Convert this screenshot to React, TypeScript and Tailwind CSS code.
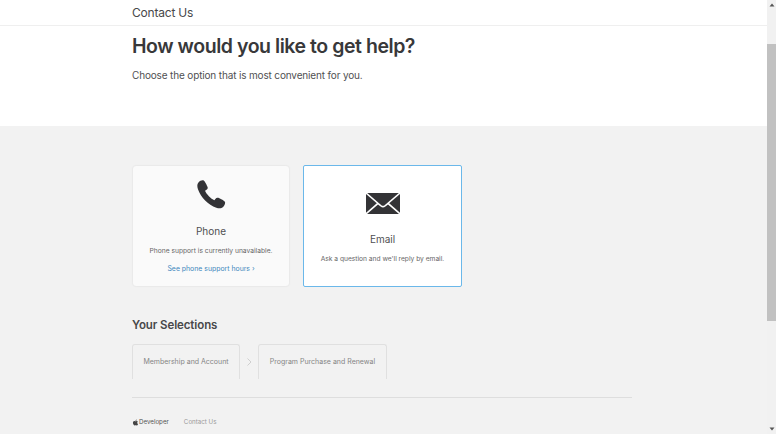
import React from "react";
import { FaApple } from "react-icons/fa";

function PhoneIcon() {
  return (
    <svg width="29" height="29" viewBox="0 0 30 30" className="block">
      <path
        d="M1.5 2.5 C3 0.8 5.5 -0.2 7 0.6 C8 1.2 10.5 6 11 7.6 C11.3 8.8 10.8 9.5 9.5 10.4 L8.3 11.2 C9.6 14.6 14.5 19.6 18 21 L19 19.6 C19.9 18.4 20.8 18 22 18.4 C23.6 19 28 21.4 28.8 22.4 C29.6 23.6 28.6 26.4 27 27.9 C25.3 29.5 22.6 29.4 20 28.6 C11.5 25.8 4 18 1 9.5 C0.2 7 -0.2 4.5 1.5 2.5 Z"
        fill="#333336"
      />
    </svg>
  );
}

function MailIcon() {
  return (
    <svg width="34" height="21" viewBox="0 0 34 21" className="block">
      <path d="M1.2 0 H32.8 L18.6 12.2 C17.6 13 16.4 13 15.4 12.2 Z" fill="#333336" />
      <path d="M0 1 L10.8 10.3 L0 19.8 Z" fill="#333336" />
      <path d="M34 1 L23.2 10.3 L34 19.8 Z" fill="#333336" />
      <path d="M1 21 L12 11.4 L14.6 13.6 C16.1 14.9 17.9 14.9 19.4 13.6 L22 11.4 L33 21 Z" fill="#333336" />
    </svg>
  );
}

function Selection({ label, width }: { label: string; width: string }) {
  return (
    <div className={`${width} h-[35px] pt-[1px] border border-b-0 border-[#e0e0e0] rounded-t-[3px] flex items-center justify-center text-[7px] text-[#858585]`}>
      {label}
    </div>
  );
}

export default function App() {
  return (
    <div className="w-[779px] h-[437px] bg-white overflow-hidden flex font-['Inter','Liberation_Sans',sans-serif]">
      <main className="w-[767px] h-[434px] flex flex-col overflow-hidden">
        <header className="h-[26px] shrink-0 border-b border-[#efefef] pl-[132px] pt-[5px] text-[12px] tracking-[-0.2px] leading-[16px] text-[#48484a]">
          Contact Us
        </header>
        <section className="h-[100px] shrink-0 pl-[132px] bg-white">
          <h1 className="mt-[8px] text-[19.5px] tracking-[-0.45px] leading-[25px] font-semibold text-[#38383a]">
            How would you like to get help?
          </h1>
          <p className="mt-[9px] text-[10px] tracking-[-0.15px] leading-[14px] text-[#505052]">
            Choose the option that is most convenient for you.
          </p>
        </section>
        <section className="flex-1 bg-[#f2f2f2] pl-[132px] pr-[135px] pt-[39px]">
          <div className="flex gap-[14px]">
            <div className="ml-[1px] mt-[1px] w-[156px] h-[120px] bg-[#fafafa] rounded-[3px] shadow-[0_0_2px_rgba(0,0,0,0.12)] flex flex-col items-center pt-[14px]">
              <PhoneIcon />
              <div className="mt-[15px] text-[10px] leading-[14px] text-[#505052]">Phone</div>
              <div className="mt-[8px] text-[6.7px] leading-[10px] text-[#666]">Phone support is currently unavailable.</div>
              <div className="mt-[8px] text-[6.9px] leading-[10px] text-[#3f88bd]">See phone support hours ›</div>
            </div>
            <div className="w-[159px] h-[122px] bg-white rounded-[2px] border border-[#6bb8ea] flex flex-col items-center pt-[27px]">
              <MailIcon />
              <div className="mt-[18px] text-[10px] leading-[14px] text-[#505052]">Email</div>
              <div className="mt-[8px] text-[6.65px] leading-[10px] text-[#666]">Ask a question and we'll reply by email.</div>
            </div>
          </div>
          <h2 className="mt-[30px] text-[11.5px] tracking-[-0.1px] leading-[16px] font-semibold text-[#48484a]">Your Selections</h2>
          <div className="mt-[11px] flex items-center">
            <Selection label="Membership and Account" width="w-[108px]" />
            <svg width="18" height="10" viewBox="0 0 18 10" className="block">
              <path d="M7.5 1.5 L11 5 L7.5 8.5" fill="none" stroke="#cfcfcf" strokeWidth="1" />
            </svg>
            <Selection label="Program Purchase and Renewal" width="w-[129px]" />
          </div>
          <div className="mt-[18px] border-t border-[#dedede]" />
          <footer className="mt-[20px] flex items-center text-[6.2px] leading-[8px]">
            <FaApple className="text-[7px] text-[#444]" />
            <span className="text-[#555]">Developer</span>
            <span className="ml-[15px] text-[#999]">Contact Us</span>
          </footer>
        </section>
      </main>
      <aside className="w-[9px] h-[434px] bg-[#f1f1f1] flex flex-col items-center">
        <svg width="6" height="4" viewBox="0 0 6 4" className="mt-[3px] block"><path d="M3 0.5 L5.5 3.5 H0.5 Z" fill="#555" /></svg>
        <div className="mt-[37px] w-full h-[277px] bg-[#c1c1c1]" />
        <div className="flex-1" />
        <svg width="6" height="4" viewBox="0 0 6 4" className="mb-[3px] block"><path d="M3 3.5 L5.5 0.5 H0.5 Z" fill="#555" /></svg>
      </aside>
    </div>
  );
}
